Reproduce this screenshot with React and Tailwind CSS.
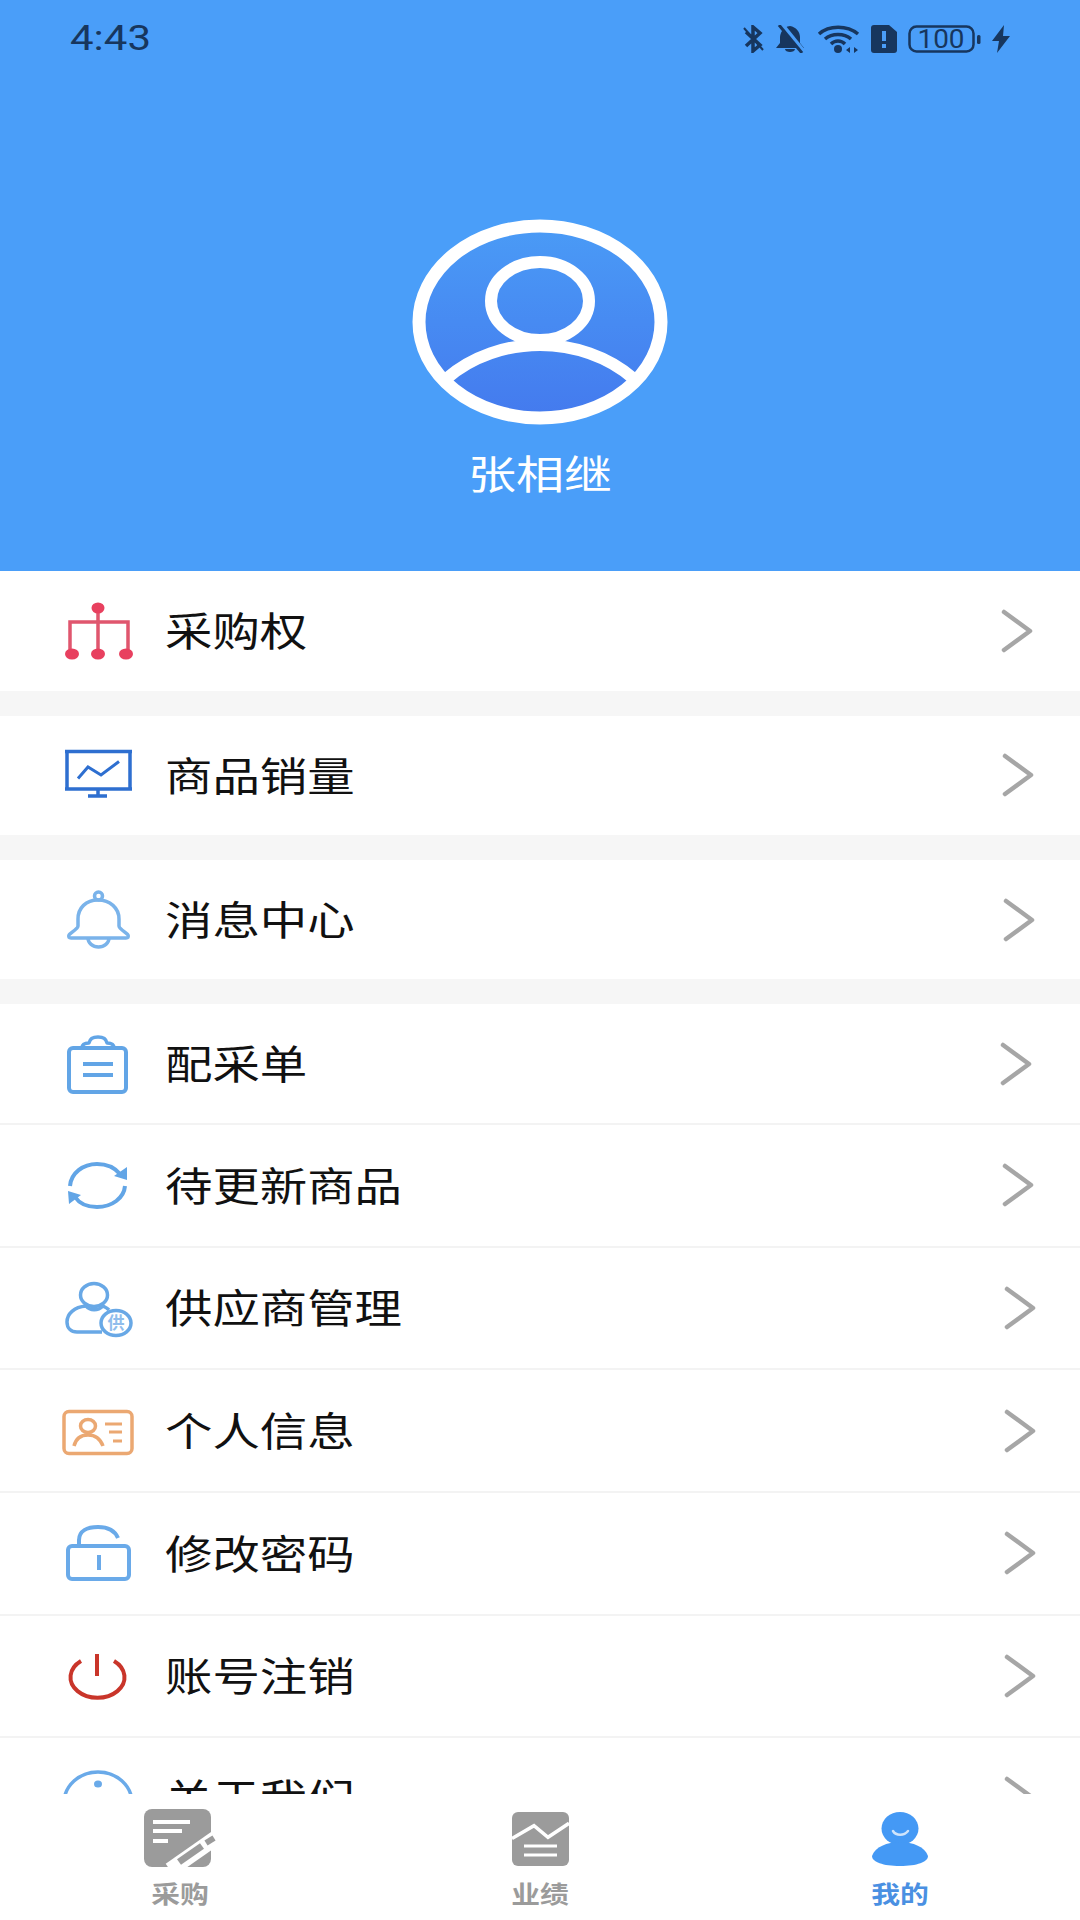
import React from "react";

const StatusIcons = () => (
  <div className="flex items-center gap-[11px] text-[#17365e]">
    <svg width="21" height="28" viewBox="0 0 21 28" fill="none" stroke="currentColor" strokeWidth="3.5">
      <path d="M3 7 L17 20 L10 26 L10 2 L17 8 L3 21" />
      <path d="M1 3 L20 25" strokeWidth="2" />
    </svg>
    <svg width="31" height="28" viewBox="0 0 31 28" fill="currentColor">
      <path d="M15 1 C8 2 5 8 5 13 L5 18 L1 23 L29 23 L25 18 L25 12 C25 7 21 2 15 1Z" />
      <path d="M10 24 L20 24 C20 28 10 28 10 24Z" />
      <path d="M6 -1 L28 26" stroke="#4a9ef9" strokeWidth="5" />
      <path d="M4 0 L27 28" stroke="currentColor" strokeWidth="3" />
    </svg>
    <svg width="43" height="28" viewBox="0 0 43 28" fill="none" stroke="currentColor" strokeWidth="3.5">
      <path d="M2 9 C12 0 30 0 41 9" />
      <path d="M8 14 C15 8 27 8 34 14" />
      <path d="M14 19 C18 15 24 15 28 19" />
      <circle cx="21" cy="24" r="4" fill="currentColor" stroke="none" />
      <path d="M33 22 L29 25 L33 28Z M37 22 L41 25 L37 28Z" fill="currentColor" stroke="none" />
    </svg>
    <svg width="26" height="28" viewBox="0 0 26 28">
      <path d="M3 0 L18 0 L26 7 L26 25 Q26 28 23 28 L3 28 Q0 28 0 25 L0 3 Q0 0 3 0Z" fill="currentColor" />
      <rect x="11" y="6" width="4" height="10" fill="#4a9ef9" />
      <rect x="11" y="19" width="4" height="4" fill="#4a9ef9" />
    </svg>
    <svg width="73" height="28" viewBox="0 0 73 28" fill="none">
      <rect x="1.5" y="1.5" width="64" height="25" rx="7" stroke="currentColor" strokeWidth="2.5" />
      <text x="33" y="22.5" textAnchor="middle" fontSize="25" fontFamily="Roboto, sans-serif" fill="currentColor" textLength="47" lengthAdjust="spacingAndGlyphs">
        100
      </text>
      <rect x="69" y="10" width="3.5" height="9" rx="1.5" fill="currentColor" />
    </svg>
    <svg width="18" height="28" viewBox="0 0 18 28" fill="currentColor">
      <path d="M12 0 L0 16 L7 16 L5 28 L18 11 L11 11Z" />
    </svg>
  </div>
);

const Avatar = () => (
  <svg width="256" height="206" viewBox="0 0 256 206" fill="none">
    <defs>
      <linearGradient id="avatarFill" x1="0" y1="0" x2="0" y2="1">
        <stop offset="0" stopColor="#4a9bf6" />
        <stop offset="1" stopColor="#447aee" />
      </linearGradient>
    </defs>
    <ellipse cx="128" cy="103" rx="121" ry="96" fill="url(#avatarFill)" stroke="#fff" strokeWidth="13" />
    <ellipse cx="128" cy="82" rx="49" ry="39" stroke="#fff" strokeWidth="12" />
    <path d="M34 160 C60 137 95 126 128 126 C161 126 196 137 222 160" stroke="#fff" strokeWidth="12" />
  </svg>
);

const Chevron = () => (
  <svg width="34" height="46" viewBox="0 0 34 46" fill="none" stroke="#a6a6a6" strokeWidth="4.5" strokeLinecap="round" strokeLinejoin="round">
    <path d="M5 4 L31 23 L5 42" />
  </svg>
);

const Box = ({ children }) => (
  <svg width="72" height="64" viewBox="0 0 72 64" fill="none">
    {children}
  </svg>
);

const icons = {
  org: (
    <Box>
      <path d="M36 9 L36 55 M8 55 L8 23 L66 23 L66 55" stroke="#e0566e" strokeWidth="3.5" />
      <ellipse cx="36" cy="9" rx="6.5" ry="5.5" fill="#e8405f" />
      <ellipse cx="10" cy="55" rx="7" ry="5.5" fill="#e8405f" />
      <ellipse cx="36" cy="55" rx="7" ry="5.5" fill="#e8405f" />
      <ellipse cx="64" cy="55" rx="7" ry="5.5" fill="#e8405f" />
    </Box>
  ),
  screen: (
    <Box>
      <g stroke="#2e6fd0" strokeWidth="3.5">
        <path d="M3 8.5 L70 8.5 M3 46 L70 46 M5 8.5 L5 46 M68 8.5 L68 46 M36 46 L36 53 M26 53 L45 53" />
        <path d="M16 35.5 L26 24 L39 32 L57 18.5" strokeWidth="3" />
      </g>
    </Box>
  ),
  bell: (
    <Box>
      <g stroke="#7ab3ea" strokeWidth="3.5">
        <circle cx="36.5" cy="8" r="4" />
        <path d="M36 12 C24 12 16 20 16 31 L16 38 C16 41 8 45 7 47 C6 49 7 50 9 50 L64 50 C66 50 67 49 66 47 C65 45 57 41 57 38 L57 31 C57 20 48 12 36 12Z" />
        <path d="M26 50 A 10.5 9 0 0 0 47 50" />
      </g>
    </Box>
  ),
  clipboard: (
    <Box>
      <g stroke="#62a5e6" strokeWidth="4" strokeLinejoin="round">
        <rect x="7" y="16" width="57" height="44" rx="4" />
        <path d="M20 16 C20 12 24 11 27 11 C28 6 31 5 36 5 C41 5 44 6 45 11 C48 11 52 12 52 16" strokeWidth="3.5" />
        <path d="M21 32 L51 32 M21 43 L51 43" />
      </g>
    </Box>
  ),
  refresh: (
    <Box>
      <g stroke="#62a5e6" strokeWidth="4">
        <path d="M8 33 C9 20 21 11 35 11 C45 11 53 15 58 21" />
        <path d="M63 33 C62 45 50 54 35 54 C25 54 17 50 13 44" />
      </g>
      <path d="M65 14 L65 27 L52 23Z M6 38 L7 51 L19 42Z" fill="#62a5e6" />
    </Box>
  ),
  supplier: (
    <Box>
      <g stroke="#68a8e6" strokeWidth="3.5">
        <ellipse cx="32" cy="19" rx="13.5" ry="11.5" />
        <path d="M24 30 C12 31 5 38 5 46 C5 52 9 56 15 56 L40 56" />
        <path d="M24 30 C28 35 36 35 41 30 C43 31 45 32 47 34" />
        <ellipse cx="54" cy="47" rx="15" ry="12.5" />
      </g>
      <text x="54" y="53" textAnchor="middle" fontSize="17" fontWeight="700" fill="#8fbdec" fontFamily="'Noto Sans CJK SC', sans-serif">
        供
      </text>
    </Box>
  ),
  card: (
    <Box>
      <g stroke="#eba872" strokeWidth="3.5">
        <rect x="2" y="12.5" width="68" height="42" rx="5" />
        <ellipse cx="26" cy="27" rx="7.5" ry="6.5" />
        <path d="M12 47 C14 39 20 36 26 36 C32 36 38 39 41 47" />
        <path d="M43 25 L60 25 M47 33 L60 33 M51 42 L60 42" strokeWidth="3" />
      </g>
    </Box>
  ),
  lock: (
    <Box>
      <g stroke="#6aaae9" strokeWidth="4">
        <rect x="6" y="25" width="61" height="33" rx="4" />
        <path d="M17 25 L17 19 C17 10 25 6 36 6 C46 6 53 10 56 17" />
        <path d="M37 34 L37 49" />
      </g>
    </Box>
  ),
  power: (
    <Box>
      <g stroke="#c9352a" strokeWidth="4">
        <path d="M19 17 A 27 20.5 0 1 0 52 17" />
        <path d="M35 10 L35 32" />
      </g>
    </Box>
  ),
  info: (
    <Box>
      <ellipse cx="36" cy="37" rx="34" ry="31" stroke="#6aaae9" strokeWidth="3.5" />
      <ellipse cx="36" cy="18" rx="4" ry="3.5" fill="#6aaae9" />
      <path d="M36 28 L36 50" stroke="#6aaae9" strokeWidth="4" />
    </Box>
  ),
};

const MenuRow = ({ icon, label, className }) => (
  <div className={`flex items-center bg-white pl-[62px] ${className}`}>
    {icons[icon]}
    <span className="mb-[4px] ml-[31px] inline-block origin-left scale-x-[1.2] text-[39.5px] leading-none text-[#111]">
      {label}
    </span>
    <div className="ml-auto">
      <Chevron />
    </div>
  </div>
);

const Gap = () => <div className="h-[25px] bg-[#f6f6f6]" />;

const divided = "h-[122.6px] border-b-2 border-[#f3f3f3]";

const NavItem = ({ label, active, children }) => (
  <div className="flex flex-col items-center">
    <div className="flex h-[60px] items-end justify-center">{children}</div>
    <span
      className={`mt-[13px] inline-block scale-x-[1.2] text-[24px] font-bold leading-none ${
        active ? "text-[#4a90e2]" : "text-[#9b9b9b]"
      }`}
    >
      {label}
    </span>
  </div>
);

export default function App() {
  return (
    <div className="flex h-[1920px] w-[1080px] flex-col overflow-hidden bg-white font-['Noto_Sans_CJK_SC',sans-serif]">
      <header className="flex h-[571px] shrink-0 flex-col items-center bg-[#4a9ef9]">
        <div className="flex w-full items-center justify-between pl-[70px] pr-[70px] pt-[25px]">
          <span className="inline-block origin-left scale-x-[1.2] font-['Roboto',sans-serif] text-[35px] leading-[28px] text-[#17365e]">
            4:43
          </span>
          <StatusIcons />
        </div>
        <div className="mt-[166px]">
          <Avatar />
        </div>
        <span className="mt-[27px] inline-block scale-x-[1.2] text-[40px] leading-none text-white">张相继</span>
      </header>

      <main className="min-h-0 flex-1 overflow-hidden">
        <MenuRow icon="org" label="采购权" className="h-[119.6px] pr-[47px]" />
        <Gap />
        <MenuRow icon="screen" label="商品销量" className="h-[119.6px] pr-[46px]" />
        <Gap />
        <MenuRow icon="bell" label="消息中心" className="h-[119.3px] pr-[45px]" />
        <Gap />
        <MenuRow icon="clipboard" label="配采单" className="h-[120.7px] border-b-2 border-[#f3f3f3] pr-[48px]" />
        <MenuRow icon="refresh" label="待更新商品" className={`${divided} pr-[46px]`} />
        <MenuRow icon="supplier" label="供应商管理" className={`${divided} pr-[44px]`} />
        <MenuRow icon="card" label="个人信息" className={`${divided} pr-[44px]`} />
        <MenuRow icon="lock" label="修改密码" className={`${divided} pr-[44px]`} />
        <MenuRow icon="power" label="账号注销" className={`${divided} pr-[44px]`} />
        <MenuRow icon="info" label="关于我们" className="h-[119px] pr-[44px]" />
      </main>

      <nav className="grid h-[126px] shrink-0 grid-cols-3 bg-white pt-[14px]">
        <NavItem label="采购">
          <svg width="72" height="60" viewBox="0 0 72 60">
            <rect x="0" y="1" width="67" height="58" rx="8" fill="#9b9b9b" />
            <path d="M9 14 L46 14 M9 23 L38 23 M9 33 L24 33" stroke="#fff" strokeWidth="4" />
            <path d="M26 62 L76 27" stroke="#fff" strokeWidth="15" />
            <path d="M35 54 L58 38" stroke="#9b9b9b" strokeWidth="7" />
            <path d="M62 35 L70 30" stroke="#9b9b9b" strokeWidth="6" />
          </svg>
        </NavItem>
        <NavItem label="业绩">
          <svg className="mb-[2px]" width="57" height="54" viewBox="0 0 57 54" fill="none">
            <rect width="57" height="54" rx="6" fill="#9b9b9b" />
            <path d="M0 26.5 L22 13.7 L36 25.3 L57 11.3" stroke="#fff" strokeWidth="3.5" />
            <path d="M12 34 L45 34 M12 43 L45 43" stroke="#fff" strokeWidth="3" />
          </svg>
        </NavItem>
        <NavItem label="我的" active>
          <svg className="mb-[2px]" width="56" height="54" viewBox="0 0 56 54" fill="none">
            <ellipse cx="28" cy="16.5" rx="18.5" ry="16.5" fill="#4499f5" />
            <path d="M21 19 C24 24 32 24 36 19" stroke="#cfe4fb" strokeWidth="2.5" strokeLinecap="round" />
            <path d="M0 44 C3 35 15 30 28 30 C41 30 53 35 56 44 C56 50 45 54 28 54 C11 54 0 50 0 44Z" fill="#4499f5" />
          </svg>
        </NavItem>
      </nav>
    </div>
  );
}
